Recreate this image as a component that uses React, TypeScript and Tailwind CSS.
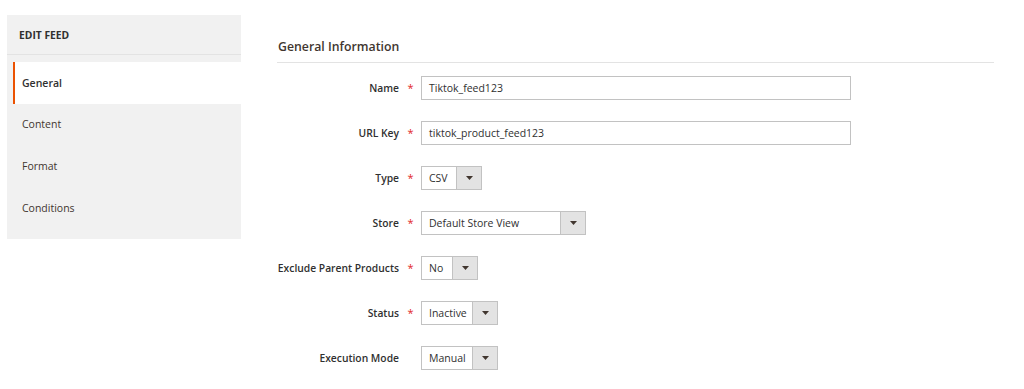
import React from "react";

const font = { fontFamily: '"Open Sans", "Noto Sans", Arial, sans-serif' };

function Arrow() {
  return (
    <svg width="7" height="4" viewBox="0 0 7 4" className="block">
      <path d="M0 0 H7 L3.5 4 Z" fill="#41362f" />
    </svg>
  );
}

function Select({ value, width }: { value: string; width: string }) {
  return (
    <div className={`flex h-[24px] border border-[#c2c2c2] bg-white ${width}`}>
      <div className="flex flex-1 items-center whitespace-nowrap pl-[7px] pt-[1px] text-[10.5px] text-[#303030]">{value}</div>
      <div className="flex w-[25px] items-center justify-center border-l border-[#c2c2c2] bg-[#e3e3e3]">
        <Arrow />
      </div>
    </div>
  );
}

function Row({ label, required, children }: { label: string; required?: boolean; children: React.ReactNode }) {
  return (
    <div className="flex h-[24px] items-center">
      <div className="w-[122px] shrink-0 whitespace-nowrap pt-[1px] text-right text-[10.3px] font-semibold text-[#303030]">{label}</div>
      <div className="flex w-[22px] shrink-0 justify-center pl-[1px] pt-[1px] text-[11px] text-[#e22626]">
        {required ? "*" : ""}
      </div>
      {children}
    </div>
  );
}

export default function App() {
  const items = ["Content", "Format", "Conditions"];
  return (
    <div className="flex h-[389px] w-[1024px] bg-white pl-[7px] pt-[15px]" style={font}>
      <div className="h-[224px] w-[234px] shrink-0 bg-[#f1f1f1]">
        <div className="flex h-[40px] items-center border-b border-[#e3e3e3] pl-[12px] pt-[2px] text-[10.3px] font-bold text-[#303030]">
          EDIT FEED
        </div>
        <div className="mt-[7px] ml-[6px] flex h-[42px] items-center border-l-2 border-[#eb5202] bg-white pl-[7px] pt-[1px] text-[10.5px] font-semibold text-[#303030]">
          General
        </div>
        {items.map((t) => (
          <div key={t} className="flex h-[42px] items-center pl-[15px] text-[10.5px] text-[#41362f]">
            {t}
          </div>
        ))}
      </div>
      <div className="ml-[36px] w-[717px]">
        <div className="flex h-[48px] items-end border-b border-[#e3e3e3] pb-[6px] pl-[1px] text-[12.3px] font-semibold text-[#41362f]">
          General Information
        </div>
        <div className="mt-[13px] flex flex-col gap-[21px]">
          <Row label="Name" required>
            <div className="flex h-[24px] w-[430px] items-center border border-[#c2c2c2] bg-white pl-[7px] pt-[1px] text-[10.5px] text-[#303030]">
              Tiktok_feed123
            </div>
          </Row>
          <Row label="URL Key" required>
            <div className="flex h-[24px] w-[430px] items-center border border-[#c2c2c2] bg-white pl-[7px] pt-[1px] text-[10.5px] text-[#303030]">
              tiktok_product_feed123
            </div>
          </Row>
          <Row label="Type" required>
            <Select value="CSV" width="w-[61px]" />
          </Row>
          <Row label="Store" required>
            <Select value="Default Store View" width="w-[165px]" />
          </Row>
          <Row label="Exclude Parent Products" required>
            <Select value="No" width="w-[57px]" />
          </Row>
          <Row label="Status" required>
            <Select value="Inactive" width="w-[77px]" />
          </Row>
          <Row label="Execution Mode">
            <Select value="Manual" width="w-[77px]" />
          </Row>
        </div>
      </div>
    </div>
  );
}
